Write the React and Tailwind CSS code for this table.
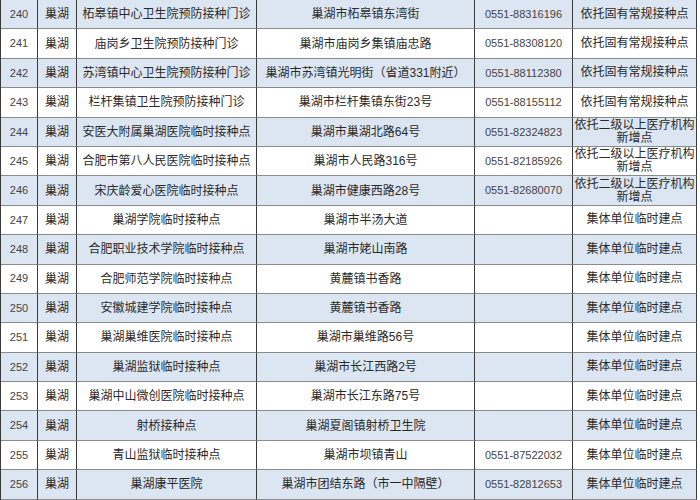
import React from "react";

const A = "依托固有常规接种点";
const B = "依托二级以上医疗机构|新增点";
const C = "集体单位临时建点";

const rows = [
  [240, "柘皋镇中心卫生院预防接种门诊", "巢湖市柘皋镇东湾街", "0551-88316196", A],
  [241, "庙岗乡卫生院预防接种门诊", "巢湖市庙岗乡集镇庙忠路", "0551-88308120", A],
  [242, "苏湾镇中心卫生院预防接种门诊", "巢湖市苏湾镇光明街（省道331附近）", "0551-88112380", A],
  [243, "栏杆集镇卫生院预防接种门诊", "巢湖市栏杆集镇东街23号", "0551-88155112", A],
  [244, "安医大附属巢湖医院临时接种点", "巢湖市巢湖北路64号", "0551-82324823", B],
  [245, "合肥市第八人民医院临时接种点", "巢湖市人民路316号", "0551-82185926", B],
  [246, "宋庆龄爱心医院临时接种点", "巢湖市健康西路28号", "0551-82680070", B],
  [247, "巢湖学院临时接种点", "巢湖市半汤大道", "", C],
  [248, "合肥职业技术学院临时接种点", "巢湖市姥山南路", "", C],
  [249, "合肥师范学院临时接种点", "黄麓镇书香路", "", C],
  [250, "安徽城建学院临时接种点", "黄麓镇书香路", "", C],
  [251, "巢湖巢维医院临时接种点", "巢湖市巢维路56号", "", C],
  [252, "巢湖监狱临时接种点", "巢湖市长江西路2号", "", C],
  [253, "巢湖中山微创医院临时接种点", "巢湖市长江东路75号", "", C],
  [254, "射桥接种点", "巢湖夏阁镇射桥卫生院", "", C],
  [255, "青山监狱临时接种点", "巢湖市坝镇青山", "0551-87522032", C],
  [256, "巢湖康平医院", "巢湖市团结东路（市一中隔壁）", "0551-82812653", C],
];

const cell =
  "flex items-center justify-center text-center border-r border-r-[#3a3a3a] border-b border-b-[#8c8c8c] overflow-hidden whitespace-nowrap";

export default function App() {
  return (
    <div
      className="w-[700px] h-[500px] bg-white overflow-hidden text-[#2a2a2a] text-[12px]"
      style={{ fontFamily: '"Liberation Sans", "Noto Sans CJK SC", sans-serif' }}
    >
      <div className="w-[697px] border-l border-l-[#3a3a3a] flex flex-col">
        {rows.map(([n, name, addr, phone, type], i) => {
          const bg = i % 2 === 0 ? "bg-[#dce6f2]" : "bg-white";
          const lines = type.split("|");
          return (
            <div
              key={n}
              className={`grid grid-cols-[37px_39px_180px_218px_98px_124px] h-[29.4px] ${bg}`}
            >
              <div className={`${cell} text-[11px] text-[#444]`}>{n}</div>
              <div className={cell}>巢湖</div>
              <div className={cell}>{name}</div>
              <div className={cell}>{addr}</div>
              <div className={`${cell} text-[11px] text-[#444]`}>{phone}</div>
              <div className={`${cell} flex-col leading-[13px]`}>
                {lines.map((l) => (
                  <span key={l}>{l}</span>
                ))}
              </div>
            </div>
          );
        })}
      </div>
    </div>
  );
}
